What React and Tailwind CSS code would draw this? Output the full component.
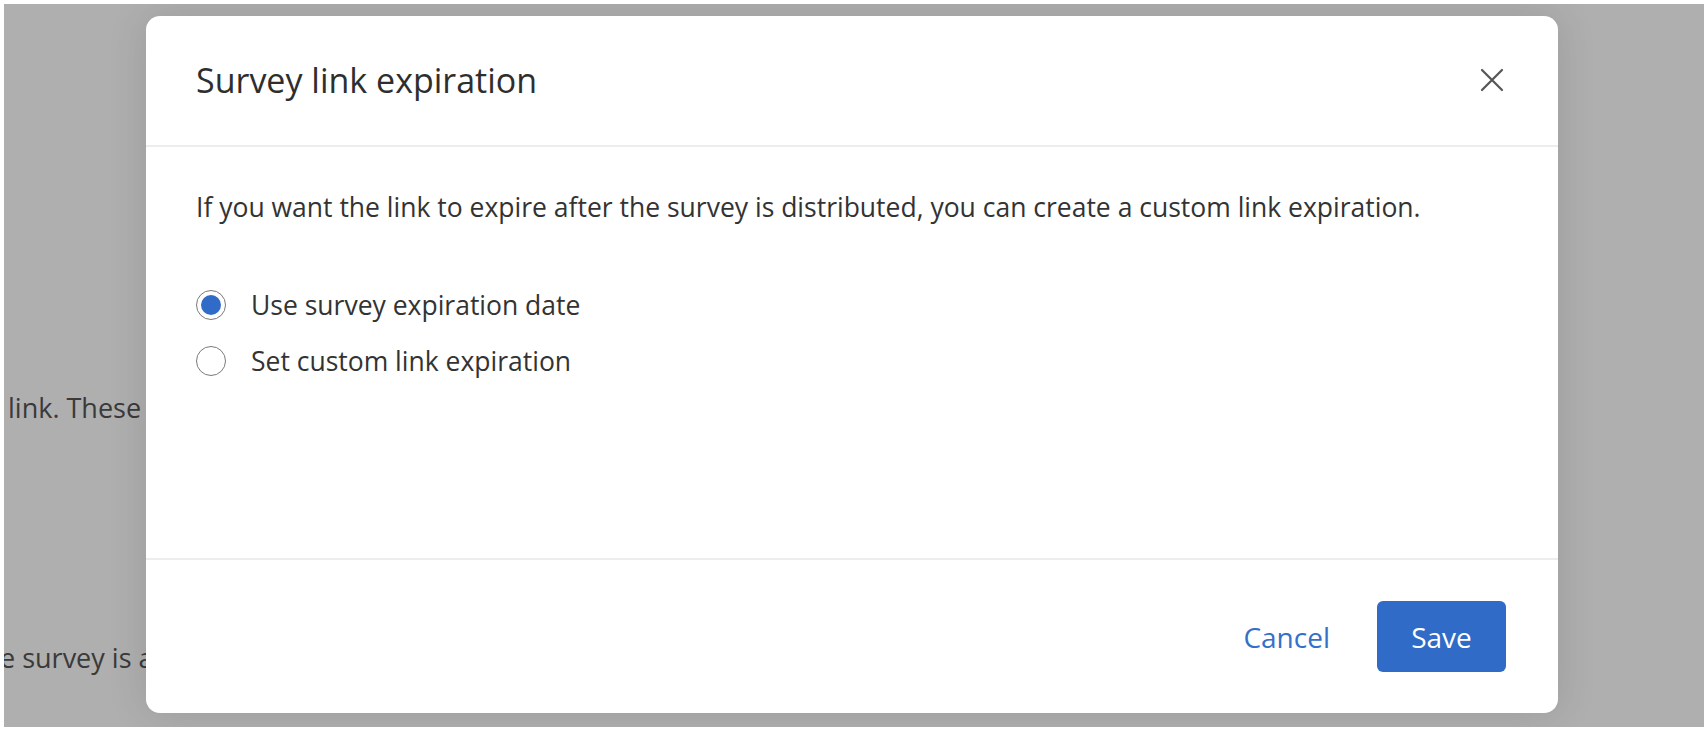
import React, { useState } from 'react';

const CloseIcon = () => (
  <svg width="24" height="24" viewBox="0 0 24 24" fill="none" stroke="#555" strokeWidth="2.2" strokeLinecap="round">
    <path d="M2 2 L22 22 M22 2 L2 22" />
  </svg>
);

const Radio = ({ checked, label, onSelect }) => (
  <label className="flex items-center h-[40px] cursor-pointer" onClick={onSelect}>
    <span className="w-[30px] h-[30px] rounded-full border-[1.5px] border-[#7a7a7a] bg-white flex items-center justify-center shrink-0">
      {checked && <span className="w-[20px] h-[20px] rounded-full bg-[#2f6bc7]" />}
    </span>
    <span className="ml-[25px] text-[26.5px] leading-[40px] text-[#333]">{label}</span>
  </label>
);

const App = () => {
  const [choice, setChoice] = useState('survey');

  return (
    <div className="w-[1708px] h-[732px] bg-white pt-[4px] px-[4px] pb-[5px] font-['Open_Sans',sans-serif] overflow-hidden">
      <div className="relative w-full h-full bg-[#afafaf] overflow-hidden">
        {/* page behind the dialog */}
        <div className="text-[27px] leading-[40.5px] text-[#3a3a3a] whitespace-nowrap">
          <p className="pt-[384px] pl-[4px]">link. These</p>
          <p className="pt-[209px] -ml-[4px]">e survey is a</p>
        </div>

        {/* dialog */}
        <div className="absolute left-[142px] top-[12px] w-[1412px] h-[697px] bg-white rounded-[14px] shadow-[0_0_40px_rgba(0,0,0,0.12)] flex flex-col">
          <div className="h-[131px] shrink-0 flex items-center justify-between pl-[50px] pr-[54px] border-b-2 border-[#ededed]">
            <h2 className="text-[34px] text-[#2e2e2e]">Survey link expiration</h2>
            <button className="p-0 mt-[-1px]">
              <CloseIcon />
            </button>
          </div>

          <div className="flex-1 pl-[50px] pr-[50px] pt-[42px]">
            <p className="text-[26.5px] leading-[36px] text-[#333] whitespace-nowrap">
              If you want the link to expire after the survey is distributed, you can create a custom link expiration.
            </p>
            <div className="mt-[60px] flex flex-col gap-[16px]">
              <Radio
                checked={choice === 'survey'}
                label="Use survey expiration date"
                onSelect={() => setChoice('survey')}
              />
              <Radio
                checked={choice === 'custom'}
                label="Set custom link expiration"
                onSelect={() => setChoice('custom')}
              />
            </div>
          </div>

          <div className="shrink-0 border-t-2 border-[#ededed] flex items-center justify-end gap-[47px] pr-[52px] pt-[41px] pb-[41px]">
            <button className="text-[28px] text-[#3570c8]">Cancel</button>
            <button className="w-[129px] h-[71px] rounded-[6px] bg-[#2f6bc7] text-white text-[28px]">Save</button>
          </div>
        </div>
      </div>
    </div>
  );
};

export default App;
